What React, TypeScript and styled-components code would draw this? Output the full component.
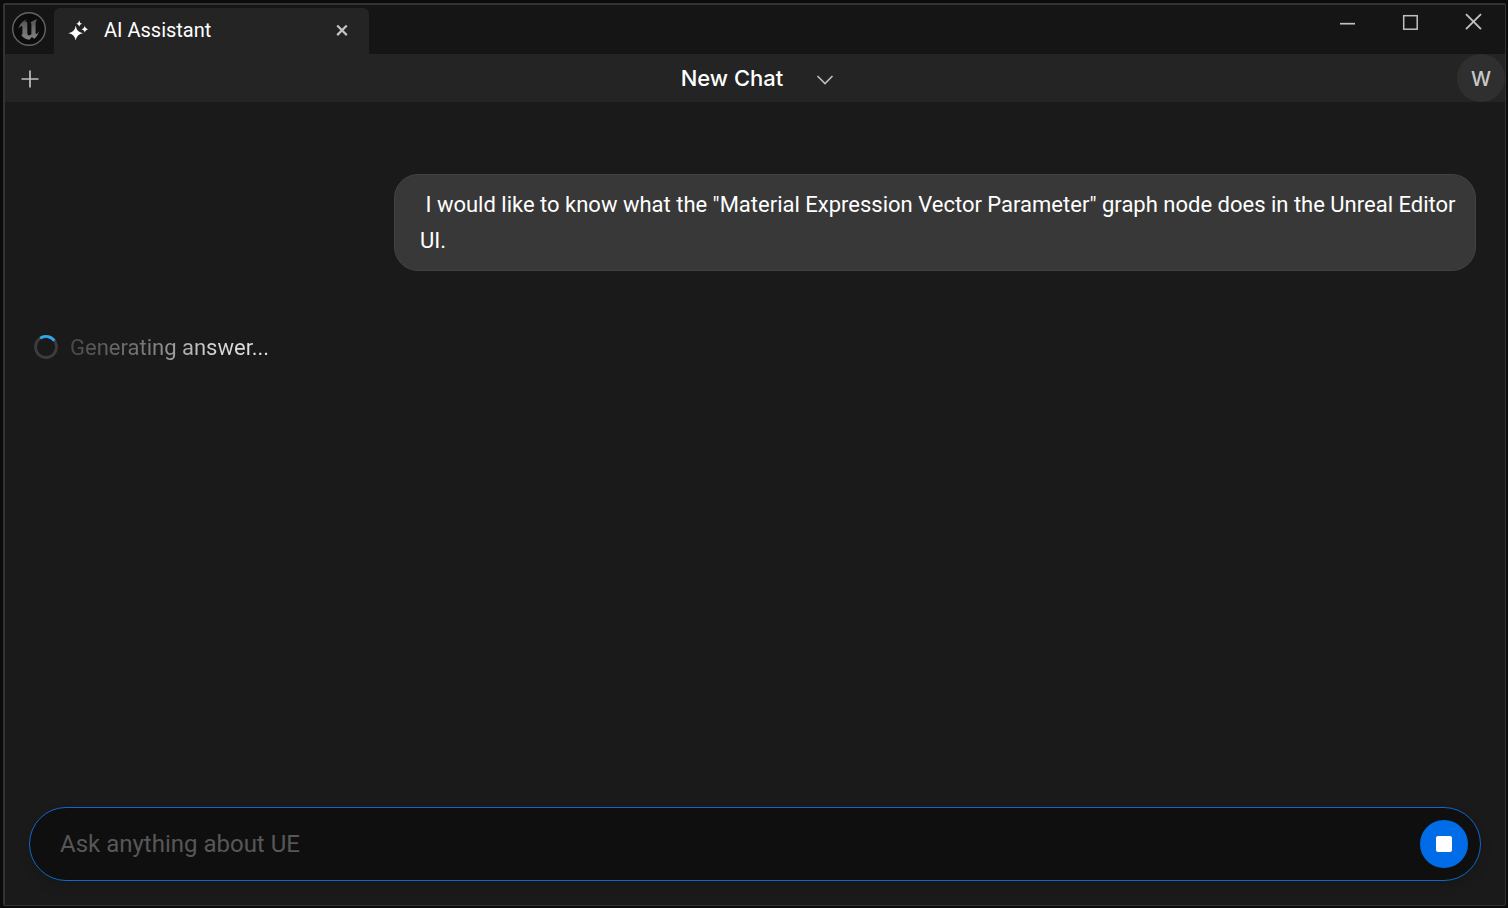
import React, { useState } from "react";
import styled, { createGlobalStyle } from "styled-components";

const GlobalStyle = createGlobalStyle`
  * {
    box-sizing: border-box;
  }

  body {
    margin: 0;
    background: #0b0b0b;
    color: #ffffff;
    font-family: Roboto, sans-serif;
  }

  button {
    margin: 0;
    padding: 0;
    border: 0;
    background: none;
    color: inherit;
    font: inherit;
    cursor: pointer;
  }
`;

const Desktop = styled.div`
  display: flex;
  min-height: 100vh;
  padding: 3px 2px 2px 3px;
`;

const WindowFrame = styled.div`
  display: flex;
  flex: 1;
  flex-direction: column;
  min-width: 0;
  border: 1px solid #333333;
  border-top-width: 2px;
  border-left-width: 2px;
  border-radius: 2px;
  background: #1a1a1a;
`;

const TitleBar = styled.header`
  display: flex;
  align-items: flex-start;
  height: 49px;
  padding-top: 3px;
  background: #151515;
`;

const LogoBox = styled.div`
  display: flex;
  padding: 3px 7px 0 6px;
`;

const Tab = styled.div`
  display: flex;
  align-items: center;
  gap: 15px;
  width: 315px;
  height: 46px;
  padding: 0 18px 2px 14px;
  border-radius: 6px 6px 0 0;
  background: #242424;
`;

const TabLabel = styled.span`
  flex: 1;
  font-size: 20px;
  line-height: 24px;
`;

const TabClose = styled.button`
  display: flex;
  color: #c4c4c4;
`;

const WindowControls = styled.div`
  display: flex;
  gap: 39px;
  margin-left: auto;
  padding: 3px 19px 0 0;
`;

const WindowButton = styled.button`
  display: flex;
  align-items: center;
  justify-content: center;
  width: 24px;
  height: 24px;
  color: #c0c0c0;
`;

const ChatBar = styled.div`
  display: grid;
  grid-template-columns: 1fr auto 1fr;
  align-items: center;
  height: 48px;
  padding-left: 5px;
  background: #242424;
`;

const NewChatButton = styled.button`
  display: flex;
  justify-self: start;
  padding: 2px 0 0 11px;
  color: #c0c0c0;
`;

const ChatPicker = styled.button`
  display: flex;
  align-items: center;
  gap: 33px;
  font-family: Inter, sans-serif;
  font-size: 22px;
  font-weight: 500;
  line-height: 24px;
`;

const Avatar = styled.button`
  justify-self: end;
  width: 48px;
  height: 48px;
  padding-top: 2px;
  border-radius: 50%;
  background: #2f2f2f;
  color: #c8c8c8;
  font-family: Inter, sans-serif;
  font-size: 20px;
  font-weight: 500;
`;

const Conversation = styled.main`
  display: flex;
  flex: 1;
  flex-direction: column;
  padding: 72px 29px 0;
`;

const UserMessage = styled.p`
  align-self: flex-end;
  max-width: 1082px;
  margin: 0;
  padding: 12px 16px 11px 25px;
  border: 1px solid #424242;
  border-radius: 24px;
  background: #383838;
  font-size: 22px;
  line-height: 36px;
  white-space: pre-wrap;
`;

const Status = styled.div`
  display: flex;
  align-items: center;
  gap: 12px;
  margin-top: 60px;
`;

const StatusText = styled.span`
  padding-top: 2px;
  background: linear-gradient(90deg, #484848 0%, #7c7c7c 40%, #d0d0d0 70%, #e8e8e8 100%);
  background-clip: text;
  color: transparent;
  font-size: 22px;
  line-height: 30px;
`;

const Composer = styled.form`
  display: flex;
  align-items: center;
  height: 74px;
  margin: 0 24px 24px;
  padding: 0 12px 0 30px;
  border: 1px solid #0c68cf;
  border-radius: 37px;
  background: #0f0f0f;
  box-shadow: 0 6px 12px rgba(0, 0, 0, 0.12);
`;

const Prompt = styled.input`
  flex: 1;
  min-width: 0;
  padding: 0;
  border: 0;
  outline: 0;
  background: none;
  color: #ffffff;
  font-family: Roboto, sans-serif;
  font-size: 24px;
  line-height: 32px;

  &::placeholder {
    color: #575757;
    opacity: 1;
  }
`;

const StopButton = styled.button`
  display: flex;
  align-items: center;
  justify-content: center;
  width: 48px;
  height: 48px;
  border-radius: 50%;
  background: #006ce8;
`;

const StopSquare = styled.span`
  width: 16px;
  height: 16px;
  border-radius: 2px;
  background: #ffffff;
`;

function UnrealLogo() {
  return (
    <svg width="36" height="36" viewBox="0 0 36 36" role="img" aria-label="Unreal Engine">
      <defs>
        <linearGradient id="metal" x1="0" y1="0" x2="0" y2="1">
          <stop offset="0" stopColor="#505050" />
          <stop offset="0.5" stopColor="#6e6e6e" />
          <stop offset="1" stopColor="#828282" />
        </linearGradient>
      </defs>
      <circle cx="18" cy="18" r="16.3" fill="#0c0c0c" stroke="#646464" strokeWidth="1.400" />
      <path
        d="M16.4 8.200C12 9.400 8.600 13 7.400 18C8.600 16.200 9.700 15 10.600 15C11.200 15 11.400 15.500 11.400 16.300V22.500C11.400 23.700 11 24 10 23.800C12 26.900 14.800 28.600 18.400 28.800L20.900 26.100L23.200 27.700C25.700 25.900 27.300 23.500 28.100 20.300C26.800 22 25.900 22.900 25.200 22.900C24.800 22.900 24.600 22.500 24.600 21.700V12.400C24.600 11.300 25.300 9.700 26.600 8.300C23.600 8.800 21.300 9.900 19.300 12C20.100 12 20.400 12.500 20.400 13.400V22.900C19.900 23.800 19.100 24.300 18.200 24.300C17 24.300 16.300 23.600 16.300 22.200V12C16.300 10.500 15.100 10.100 13.700 10.700C14.200 9.700 15.200 8.800 16.400 8.200Z"
        fill="url(#metal)"
      />
    </svg>
  );
}

function SparkleIcon() {
  return (
    <svg width="21" height="21" viewBox="0 0 21 21" fill="#ffffff" aria-hidden="true">
      <path d="M7.700 5.800Q8.700 12.200 15 13.200Q8.700 14.200 7.700 20.600Q6.700 14.200 0.400 13.200Q6.700 12.200 7.700 5.800Z" />
      <path d="M11.200 0.600Q11.600 3.200 14 3.700Q11.600 4.200 11.200 6.600Q10.800 4.200 8.400 3.700Q10.800 3.200 11.200 0.600Z" />
      <path d="M16.800 5.600Q17.200 8.700 20.200 9.200Q17.200 9.700 16.800 12.700Q16.400 9.700 13.400 9.200Q16.400 8.700 16.800 5.600Z" />
    </svg>
  );
}

export default function App() {
  const [draft, setDraft] = useState("");

  return (
    <Desktop>
      <GlobalStyle />
      <WindowFrame>
        <TitleBar>
          <LogoBox>
            <UnrealLogo />
          </LogoBox>
          <Tab>
            <SparkleIcon />
            <TabLabel>AI Assistant</TabLabel>
            <TabClose type="button" aria-label="Close tab">
              <svg width="18" height="18" viewBox="0 0 18 18" fill="none" stroke="currentColor" strokeWidth="2.200">
                <path d="M4.200 4.500L13.800 14.100M13.800 4.500L4.200 14.100" />
              </svg>
            </TabClose>
          </Tab>
          <WindowControls>
            <WindowButton type="button" aria-label="Minimize">
              <svg width="24" height="24" viewBox="0 0 24 24" fill="none" stroke="currentColor" strokeWidth="1.700">
                <path d="M4 12.700H19" />
              </svg>
            </WindowButton>
            <WindowButton type="button" aria-label="Maximize">
              <svg width="24" height="24" viewBox="0 0 24 24" fill="none" stroke="currentColor" strokeWidth="1.500">
                <rect x="4.700" y="4.700" width="13.500" height="13.500" />
              </svg>
            </WindowButton>
            <WindowButton type="button" aria-label="Close">
              <svg width="24" height="24" viewBox="0 0 24 24" fill="none" stroke="currentColor" strokeWidth="1.900">
                <path d="M4 3.100L19 18.100M19 3.100L4 18.100" />
              </svg>
            </WindowButton>
          </WindowControls>
        </TitleBar>

        <ChatBar>
          <NewChatButton type="button" aria-label="Start a new chat">
            <svg width="18" height="18" viewBox="0 0 18 18" fill="none" stroke="currentColor" strokeWidth="1.700">
              <path d="M9 0.500V17.500M0.500 9H17.500" />
            </svg>
          </NewChatButton>
          <ChatPicker type="button" aria-haspopup="listbox">
            New Chat
            <svg width="18" height="18" viewBox="0 0 18 18" fill="none" stroke="#c0c0c0" strokeWidth="1.600">
              <path d="M1.500 7L9 14.500L16.500 7" />
            </svg>
          </ChatPicker>
          <Avatar type="button" aria-label="Account W">
            W
          </Avatar>
        </ChatBar>

        <Conversation>
          <UserMessage>
            {' I would like to know what the "Material Expression Vector Parameter" graph node does in the Unreal Editor UI.'}
          </UserMessage>
          <Status role="status">
            <svg width="24" height="24" viewBox="0 0 24 24" fill="none" strokeWidth="2.800" aria-hidden="true">
              <circle cx="12" cy="12" r="10.500" stroke="#3c3c3c" />
              <path d="M6.200 3.200A10.500 10.500 0 0 1 20.400 5.700" stroke="#2fa8ee" />
            </svg>
            <StatusText>Generating answer...</StatusText>
          </Status>
        </Conversation>

        <Composer onSubmit={(event) => event.preventDefault()}>
          <Prompt
            aria-label="Ask anything about UE"
            placeholder="Ask anything about UE"
            value={draft}
            onChange={(event) => setDraft(event.target.value)}
          />
          <StopButton type="button" aria-label="Stop generating">
            <StopSquare />
          </StopButton>
        </Composer>
      </WindowFrame>
    </Desktop>
  );
}
